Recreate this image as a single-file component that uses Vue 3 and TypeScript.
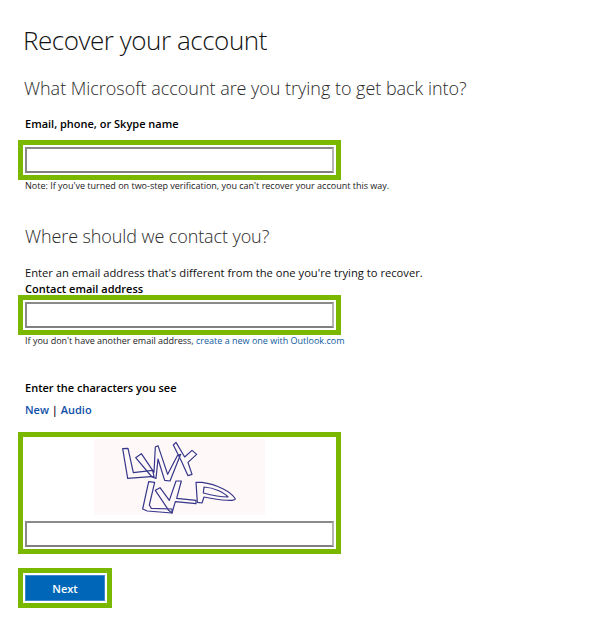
<script setup lang="ts">
const captchaStrokes: string[] = [
  'M98 41 L114 40 L130 113 L188 106 L192 124 L113 130 Z',
  'M137 68 L154 56 L192 112 L196 36 L204 32 L233 118 L262 62 L272 58 L240 138 L224 136 L204 72 L198 130 L186 126 Z',
  'M250 30 L258 22 L284 66 L306 46 L320 58 L294 82 L306 118 L294 122 L274 78 Z',
  'M176 140 L194 142 L178 210 L184 220 L246 222 L246 234 L172 228 L158 222 Z',
  'M196 166 L210 158 L238 196 L258 138 L274 138 L260 190 L318 196 L318 206 L256 200 L246 234 L236 226 Z',
  'M318 142 L336 142 C380 148 425 170 436 192 C436 198 400 198 342 186 L336 204 L322 202 Z',
  'M342 156 C372 158 402 172 414 186 C392 186 362 180 340 174 Z',
];
</script>

<template>
  <main class="page">
    <h1 class="title">Recover your account</h1>
    <h2 class="subtitle first">What Microsoft account are you trying to get back into?</h2>

    <label class="label email-label">Email, phone, or Skype name</label>
    <div class="focus-box">
      <input class="field" type="text" aria-label="Email, phone, or Skype name" />
    </div>
    <p class="small note">Note: If you've turned on two-step verification, you can't recover your account this way.</p>

    <h2 class="subtitle second">Where should we contact you?</h2>
    <p class="body">Enter an email address that's different from the one you're trying to recover.</p>
    <label class="label contact-label">Contact email address</label>
    <div class="focus-box">
      <input class="field" type="text" aria-label="Contact email address" />
    </div>
    <p class="small help">If you don't have another email address, <a class="link" href="#">create a new one with Outlook.com</a></p>

    <label class="label chars-label">Enter the characters you see</label>
    <p class="captcha-links"><a class="strong-link" href="#">New</a> | <a class="strong-link" href="#">Audio</a></p>

    <div class="focus-box captcha-box">
      <svg class="captcha" viewBox="12 12 513 228" role="img" aria-label="Captcha image">
        <path v-for="(d, i) in captchaStrokes" :key="i" :d="d" />
      </svg>
      <input class="field" type="text" aria-label="Enter the characters you see" />
    </div>

    <div class="focus-box button-box">
      <button class="next" type="button">Next</button>
    </div>
  </main>
</template>

<style scoped>
.page {
  width: 600px;
  height: 626px;
  box-sizing: border-box;
  padding: 24px 0 0 18px;
  overflow: hidden;
  background: #fff;
  color: #111;
  font-family: "Open Sans", "Noto Sans", sans-serif;
}
.title {
  margin: 0 0 0 5px;
  height: 32px;
  font-size: 26px;
  line-height: 32px;
  font-weight: 300;
  letter-spacing: -0.45px;
  color: #111;
}
.subtitle {
  margin: 0;
  height: 28px;
  font-size: 18px;
  line-height: 28px;
  font-weight: 300;
  letter-spacing: -0.03px;
  color: #2a2a2a;
}
.first {
  margin: 18px 0 0 6px;
}
.second {
  margin: 30px 0 0 7px;
  letter-spacing: -0.1px;
}
.label {
  display: block;
  margin-left: 7px;
  height: 16px;
  font-size: 11px;
  line-height: 16px;
  font-weight: 600;
  color: #000;
}
.email-label {
  margin-top: 14px;
  margin-bottom: 8px;
}
.contact-label {
  height: 12px;
  margin-top: 2px;
  line-height: 12px;
}
.chars-label {
  margin-top: 33px;
}
.focus-box {
  box-sizing: border-box;
  width: 323px;
  height: 40px;
  padding: 2px;
  border: 5px solid #7ab800;
  background: #fff;
}
.field {
  display: block;
  box-sizing: border-box;
  width: 309px;
  height: 26px;
  margin: 0;
  padding: 0;
  border: 2px solid;
  border-color: #8a8a8a #b5b5b5 #808080 #8a8a8a;
  border-radius: 0;
  background: #fff;
  outline: none;
}
.small {
  margin: 0 0 0 7px;
  height: 12px;
  font-size: 9px;
  line-height: 12px;
  color: #222;
}
.body {
  margin: 15px 0 0 7px;
  height: 16px;
  font-size: 11.2px;
  line-height: 16px;
  color: #111;
}
.link {
  color: #0f5b9e;
  text-decoration: none;
}
.captcha-links {
  margin: 6px 0 0 7px;
  height: 16px;
  font-size: 11px;
  line-height: 16px;
  font-weight: 600;
  color: #111;
}
.strong-link {
  color: #0f4fa8;
  text-decoration: none;
}
.captcha-box {
  height: 122px;
  margin-top: 14px;
}
.captcha {
  display: block;
  width: 171px;
  height: 76px;
  margin-left: 69px;
  background: #fff8f8;
  fill: none;
  stroke: #35378a;
  stroke-width: 3.6;
  stroke-linejoin: round;
}
.captcha + .field {
  margin-top: 6px;
}
.button-box {
  width: 94px;
  margin-top: 14px;
}
.next {
  display: block;
  box-sizing: border-box;
  width: 80px;
  height: 26px;
  margin: 0;
  padding: 0;
  border: 1px solid #3f86cf;
  border-radius: 0;
  background: #0067b8;
  color: #fff;
  font-family: inherit;
  font-size: 11px;
  font-weight: 600;
}
</style>
